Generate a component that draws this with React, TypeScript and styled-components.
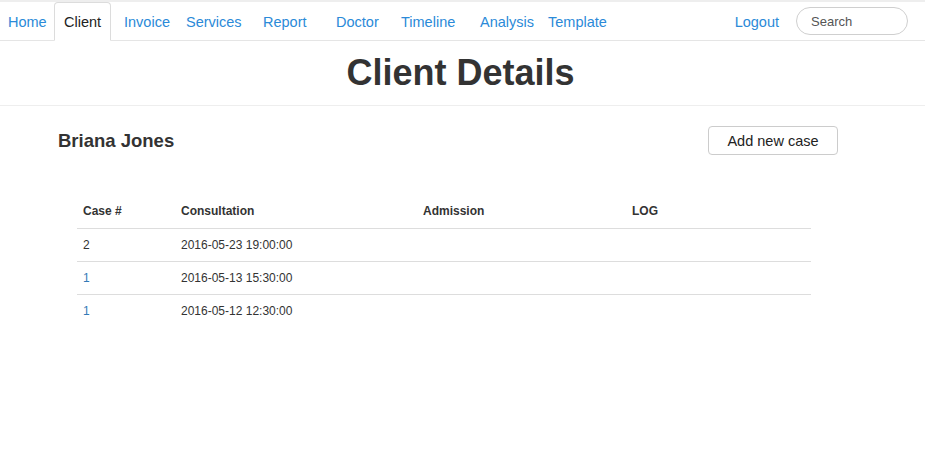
import React from "react";
import styled, { createGlobalStyle } from "styled-components";

const GlobalStyle = createGlobalStyle`
  html, body {
    margin: 0;
    padding: 0;
    background: #fff;
    font-family: "Liberation Sans", Arial, sans-serif;
    color: #333;
  }
  * {
    box-sizing: border-box;
  }
`;

const Page = styled.div`
  width: 925px;
  min-height: 466px;
  border-top: 2px solid #eeeeee;
`;

const NavBar = styled.nav`
  display: flex;
  align-items: center;
  height: 39px;
  border-bottom: 1px solid #e5e5e5;
  padding-right: 17px;
`;

const NavList = styled.ul`
  display: flex;
  align-items: stretch;
  height: 100%;
  margin: 0;
  padding: 0;
  list-style: none;
  flex: 1;
`;

const NavItem = styled.li<{ $w?: number; $active?: boolean }>`
  display: flex;
  align-items: center;
  width: ${(p) => (p.$w ? `${p.$w}px` : "auto")};
  padding-left: 10px;
  padding-top: 1px;
  font-size: 14.5px;
  color: ${(p) => (p.$active ? "#222" : "#2b8ad8")};
  cursor: pointer;
  white-space: nowrap;

  &:first-child {
    padding-left: 8px;
  }

  ${(p) =>
    p.$active &&
    `
    padding-right: 10px;
    margin-right: 3px;
    margin-bottom: -1px;
    border: 1px solid #dcdcdc;
    border-bottom-color: #fff;
    border-radius: 4px 4px 0 0;
    background: #fff;
    padding-left: 9px;
  `}
`;

const RightLink = styled.a`
  font-size: 14.5px;
  color: #2b8ad8;
  text-decoration: none;
  margin-right: 17px;
  padding-top: 1px;
  cursor: pointer;
`;

const SearchInput = styled.input`
  width: 112px;
  height: 28px;
  border: 1px solid #cfcfcf;
  border-radius: 14px;
  padding: 0 14px;
  font-family: "Liberation Sans", Arial, sans-serif;
  font-size: 13px;
  color: #555;
  outline: none;

  &::placeholder {
    color: #555;
  }
`;

const TitleBar = styled.header`
  height: 65px;
  display: flex;
  align-items: center;
  justify-content: center;
  border-bottom: 1px solid #eeeeee;
`;

const Title = styled.h1`
  margin: 0 4px 0 0;
  font-size: 36px;
  font-weight: bold;
  color: #333;
`;

const Content = styled.main`
  padding: 20px 87px 0 58px;
`;

const ClientRow = styled.div`
  display: flex;
  align-items: center;
  justify-content: space-between;
  height: 29px;
`;

const ClientName = styled.h2`
  margin: 0;
  font-size: 18.5px;
  font-weight: bold;
  color: #333;
`;

const Button = styled.button`
  width: 130px;
  height: 29px;
  background: #fff;
  border: 1px solid #ccc;
  border-radius: 4px;
  font-family: "Liberation Sans", Arial, sans-serif;
  font-size: 14.5px;
  color: #222;
  cursor: pointer;
`;

const Table = styled.table`
  margin: 40px 0 0 19px;
  width: 734px;
  border-collapse: collapse;
  font-size: 12px;
  color: #333;
`;

const Th = styled.th<{ $w: number }>`
  width: ${(p) => p.$w}px;
  height: 33px;
  padding: 0 6px;
  text-align: left;
  font-weight: bold;
  vertical-align: middle;
`;

const Row = styled.tr`
  & + & td {
    border-top: 1px solid #dddddd;
  }
`;

const HeadRow = styled.tr`
  border-bottom: 1px solid #dddddd;
`;

const Td = styled.td<{ $link?: boolean }>`
  height: 33px;
  padding: 0 6px;
  vertical-align: middle;
  color: ${(p) => (p.$link ? "#337ab7" : "#333")};
`;

const navItems = [
  { label: "Home", w: 54 },
  { label: "Client", w: 57, active: true },
  { label: "Invoice", w: 62 },
  { label: "Services", w: 77 },
  { label: "Report", w: 73 },
  { label: "Doctor", w: 65 },
  { label: "Timeline", w: 79 },
  { label: "Analysis", w: 68 },
  { label: "Template" },
];

const cases = [
  { id: "2", consultation: "2016-05-23 19:00:00", link: false },
  { id: "1", consultation: "2016-05-13 15:30:00", link: true },
  { id: "1", consultation: "2016-05-12 12:30:00", link: true },
];

export default function App() {
  return (
    <Page>
      <GlobalStyle />
      <NavBar>
        <NavList>
          {navItems.map((item) => (
            <NavItem key={item.label} $w={item.w} $active={item.active}>
              {item.label}
            </NavItem>
          ))}
        </NavList>
        <RightLink>Logout</RightLink>
        <SearchInput placeholder="Search" />
      </NavBar>

      <TitleBar>
        <Title>Client Details</Title>
      </TitleBar>

      <Content>
        <ClientRow>
          <ClientName>Briana Jones</ClientName>
          <Button>Add new case</Button>
        </ClientRow>

        <Table>
          <thead>
            <HeadRow>
              <Th $w={98}>Case #</Th>
              <Th $w={242}>Consultation</Th>
              <Th $w={209}>Admission</Th>
              <Th $w={185}>LOG</Th>
            </HeadRow>
          </thead>
          <tbody>
            {cases.map((c, i) => (
              <Row key={i}>
                <Td $link={c.link}>{c.id}</Td>
                <Td>{c.consultation}</Td>
                <Td></Td>
                <Td></Td>
              </Row>
            ))}
          </tbody>
        </Table>
      </Content>
    </Page>
  );
}
